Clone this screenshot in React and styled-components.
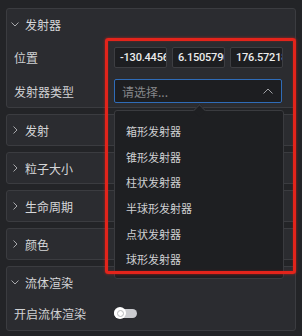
import React from "react";
import styled, { createGlobalStyle } from "styled-components";

const Global = createGlobalStyle`
  html, body { margin: 0; padding: 0; background: #232427; }
  body { font-family: "Noto Sans CJK SC", "Noto Sans", sans-serif; }
  * { box-sizing: border-box; }
`;

const Page = styled.div`
  position: relative;
  width: 302px;
  height: 336px;
  padding: 8px 6px;
  background: #232427;
  display: flex;
  flex-direction: column;
  gap: 6px;
  overflow: hidden;
`;

const Card = styled.section`
  border: 1px solid #3b3c40;
  border-radius: 3px;
  background: #2b2c30;
`;

const Header = styled.div`
  height: 30px;
  display: flex;
  align-items: center;
  padding-left: 4px;
  gap: 6px;
  color: #d6d7d9;
  font-size: 12px;
`;

const ChevBox = styled.span`
  width: 8px;
  height: 8px;
  display: flex;
  align-items: center;
  justify-content: center;
`;

const Body = styled.div`
  display: flex;
  flex-direction: column;
  gap: ${(p) => p.$gap || 10}px;
  padding: ${(p) => p.$pad || "6px 12px 4px 7px"};
`;

const Row = styled.div`
  height: 24px;
  display: flex;
  align-items: center;
`;

const Label = styled.span`
  width: 100px;
  flex: none;
  color: #d0d1d3;
  font-size: 12px;
`;

const Inputs = styled.div`
  display: flex;
  gap: 5px;
`;

const NumBox = styled.div`
  width: 53px;
  height: 21px;
  border: 1px solid #3d3e42;
  border-radius: 2px;
  background: #1d1e21;
  color: #ececec;
  font-family: Roboto, "Noto Sans", sans-serif;
  font-weight: 500;
  font-size: 11px;
  letter-spacing: -0.2px;
  line-height: 19px;
  padding: 0 1px 0 5px;
  white-space: nowrap;
  overflow: hidden;
`;

const Select = styled.div`
  width: 168px;
  height: 24px;
  border: 1px solid #2f6cb8;
  border-radius: 2px;
  background: #1d1e21;
  display: flex;
  align-items: center;
  justify-content: space-between;
  padding: 0 8px 0 7px;
  color: #85868a;
  font-size: 12px;
`;

const Toggle = styled.span`
  position: relative;
  width: 23px;
  height: 9px;
  border-radius: 5px;
  background: #cbccd0;
  display: flex;
  align-items: center;
`;

const Knob = styled.span`
  width: 12px;
  height: 12px;
  border-radius: 50%;
  background: #ffffff;
  display: flex;
  align-items: center;
  justify-content: center;
  &::after {
    content: "";
    width: 5px;
    height: 5px;
    border-radius: 50%;
    border: 1px solid #b8b9bc;
  }
`;

const Menu = styled.div`
  position: absolute;
  left: 114px;
  top: 110px;
  width: 170px;
  height: 169px;
  background: #1e1f22;
  border: 1px solid #3a3b3f;
  border-radius: 3px;
  padding: 7px 0 6px;
  display: flex;
  flex-direction: column;
  z-index: 2;
  &::before {
    content: "";
    position: absolute;
    top: -5px;
    left: 80px;
    width: 8px;
    height: 8px;
    background: #1e1f22;
    border-left: 1px solid #3a3b3f;
    border-top: 1px solid #3a3b3f;
    transform: rotate(45deg);
  }
`;

const Item = styled.div`
  height: 26px;
  display: flex;
  align-items: center;
  padding-left: 11px;
  color: #cfd0d2;
  font-size: 11px;
`;

const Highlight = styled.div`
  position: absolute;
  left: 105px;
  top: 38px;
  width: 191px;
  height: 236px;
  border: 3px solid #e3241b;
  border-radius: 3px;
  box-shadow: 0 0 3px rgba(255, 30, 20, 0.6), inset 0 0 2px rgba(255, 30, 20, 0.4);
  z-index: 3;
  pointer-events: none;
`;

const Chevron = ({ open }) => (
  <ChevBox>
    {open ? (
      <svg width="8" height="5" viewBox="0 0 8 5">
        <polyline points="0.5,0.5 4,4 7.5,0.5" fill="none" stroke="#a7a8ab" strokeWidth="1" />
      </svg>
    ) : (
      <svg width="5" height="8" viewBox="0 0 5 8">
        <polyline points="0.5,0.5 4,4 0.5,7.5" fill="none" stroke="#a7a8ab" strokeWidth="1" />
      </svg>
    )}
  </ChevBox>
);

const Collapsed = ({ title }) => (
  <Card>
    <Header>
      <Chevron />
      {title}
    </Header>
  </Card>
);

const items = ["箱形发射器", "锥形发射器", "柱状发射器", "半球形发射器", "点状发射器", "球形发射器"];

export default function App() {
  return (
    <>
      <Global />
      <Page>
        <Card>
          <Header>
            <Chevron open />
            发射器
          </Header>
          <Body>
            <Row>
              <Label>位置</Label>
              <Inputs>
                <NumBox>-130.44563</NumBox>
                <NumBox>6.150579081</NumBox>
                <NumBox>176.572183</NumBox>
              </Inputs>
            </Row>
            <Row>
              <Label>发射器类型</Label>
              <Select>
                <span>请选择...</span>
                <svg width="10" height="6" viewBox="0 0 10 6">
                  <polyline points="0.5,5.5 5,1 9.5,5.5" fill="none" stroke="#a0a1a5" strokeWidth="1" />
                </svg>
              </Select>
            </Row>
          </Body>
        </Card>
        <Collapsed title="发射" />
        <Collapsed title="粒子大小" />
        <Collapsed title="生命周期" />
        <Collapsed title="颜色" />
        <Card>
          <Header>
            <Chevron open />
            流体渲染
          </Header>
          <Body $pad="4px 12px 5px 7px">
            <Row>
              <Label>开启流体渲染</Label>
              <Toggle>
                <Knob />
              </Toggle>
            </Row>
          </Body>
        </Card>
        <Menu>
          {items.map((t) => (
            <Item key={t}>{t}</Item>
          ))}
        </Menu>
        <Highlight />
      </Page>
    </>
  );
}
